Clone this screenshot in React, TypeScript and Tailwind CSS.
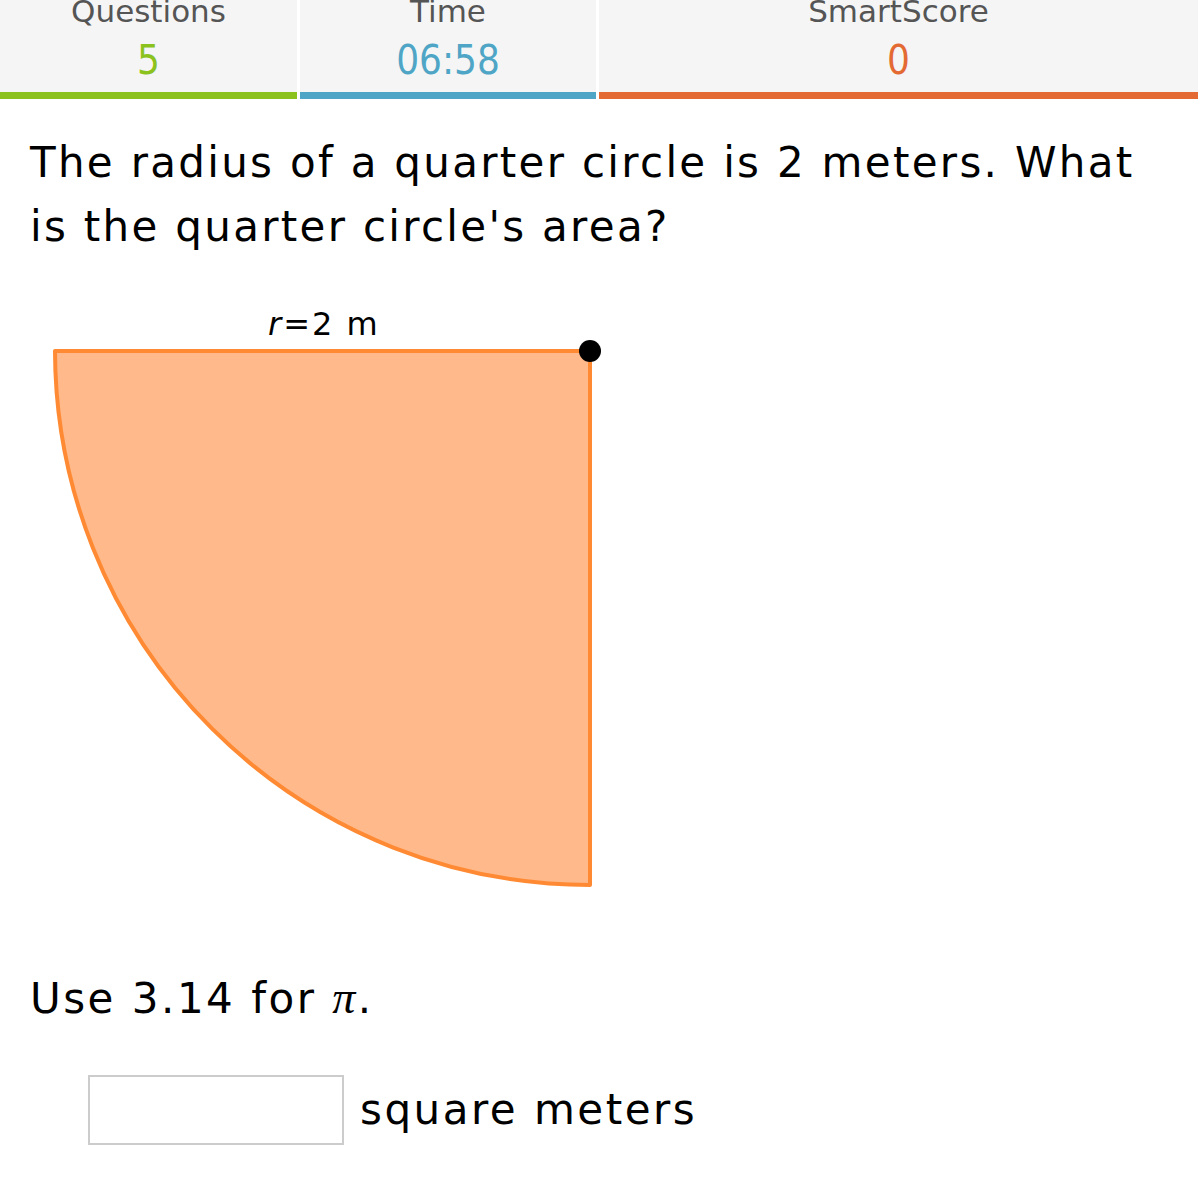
const stats = [
  { label: "Questions", value: "5", color: "text-[#8cc21e]", bar: "bg-[#8cc21e]", width: "w-[297px]" },
  { label: "Time", value: "06:58", color: "text-[#4fa5c6]", bar: "bg-[#4fa5c6]", width: "w-[296px]" },
  { label: "SmartScore", value: "0", color: "text-[#e46a34]", bar: "bg-[#e46a34]", width: "flex-1" },
];

function Header() {
  return (
    <div className="flex gap-[3px] bg-white">
      {stats.map((s) => (
        <div key={s.label} className={`${s.width} flex flex-col`}>
          <div className="flex h-[92px] flex-col items-center bg-[#f5f5f5] overflow-hidden">
            <div className="mt-[-9px] text-[31px] leading-[40px] text-[#555]">{s.label}</div>
            <div
              className={`mt-[5px] text-[40px] leading-[48px] ${s.color}`}
              style={{ fontFamily: "'DejaVu Sans Condensed', 'DejaVu Sans', sans-serif" }}
            >
              {s.value}
            </div>
          </div>
          <div className={`h-[7px] ${s.bar}`} />
        </div>
      ))}
    </div>
  );
}

function QuarterCircle() {
  // corner (590, 62) in svg coords, radius 535
  return (
    <svg width="640" height="600" viewBox="0 0 640 600" className="block">
      <text
        x="268"
        y="46"
        fontSize="32"
        fill="#000"
        letterSpacing="2"
        fontFamily="'DejaVu Sans', Verdana, sans-serif"
      >
        <tspan fontStyle="italic">r</tspan>=2 m
      </text>
      <path
        d="M55 62 L590 62 L590 596 A535 535 0 0 1 55 62 Z"
        fill="#ffb98a"
        stroke="#ff8a33"
        strokeWidth="4"
        strokeLinejoin="round"
      />
      <circle cx="590" cy="62" r="11" fill="#000" />
    </svg>
  );
}

export default function App() {
  return (
    <div
      className="w-[1198px] min-h-[1200px] bg-white text-black"
      style={{ fontFamily: "'DejaVu Sans', Verdana, sans-serif" }}
    >
      <Header />
      <div className="px-[30px] pt-[32px]">
        <p className="text-[42px] leading-[64px] tracking-[2.3px]">
          The radius of a quarter circle is 2 meters. What is the quarter circle's area?
        </p>
      </div>
      <div className="mt-[30px]">
        <QuarterCircle />
      </div>
      <div className="px-[30px] mt-[81px]">
        <p className="text-[42px] leading-[56px] tracking-[2.5px]">
          Use 3.14 for{" "}
          <span className="text-[46px] italic" style={{ fontFamily: "'Liberation Serif', serif" }}>
            π
          </span>
          .
        </p>
      </div>
      <div className="mt-[48px] flex items-center pl-[88px]">
        <div className="h-[70px] w-[256px] border-2 border-[#cccccc] bg-white" />
        <span className="ml-[16px] text-[42px] leading-[56px] tracking-[2.5px]">square meters</span>
      </div>
    </div>
  );
}
